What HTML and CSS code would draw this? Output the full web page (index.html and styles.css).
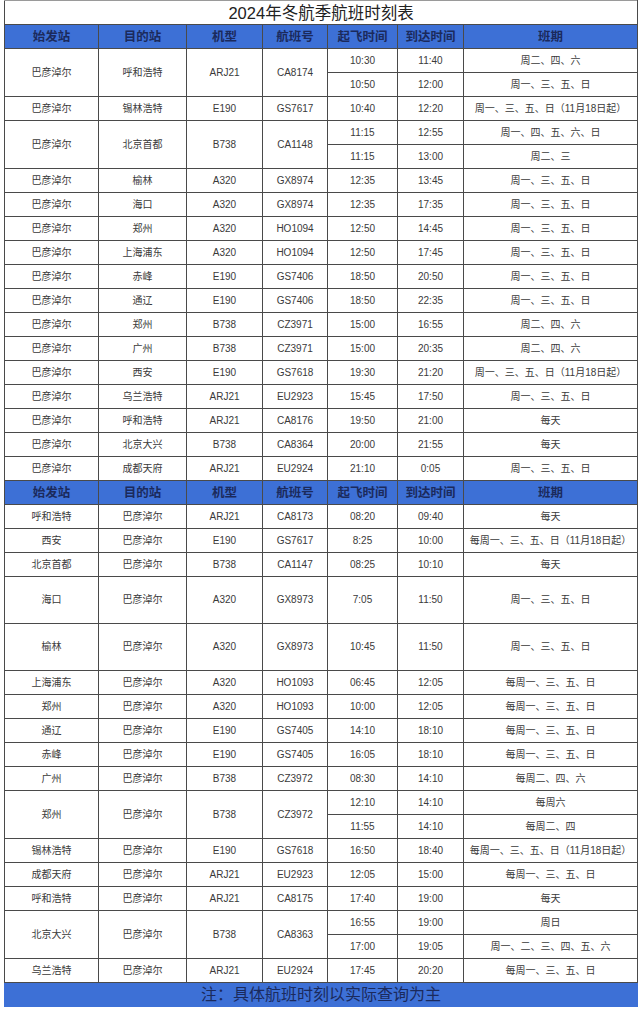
FILE: index.html
```html
<!DOCTYPE html>
<html lang="zh-CN">
<head>
<meta charset="utf-8">
<title>2024年冬航季航班时刻表</title>
<link rel="stylesheet" href="styles.css">
</head>
<body>
<table class="tt">
<colgroup>
<col class="c1"><col class="c2"><col class="c3"><col class="c4"><col class="c5"><col class="c6"><col class="c7">
</colgroup>
<tbody>
<tr class="title"><td colspan="7">2024年冬航季航班时刻表</td></tr>
<tr class="hd"><th>始发站</th><th>目的站</th><th>机型</th><th>航班号</th><th>起飞时间</th><th>到达时间</th><th>班期</th></tr>

<tr><td rowspan="2">巴彦淖尔</td><td rowspan="2">呼和浩特</td><td rowspan="2">ARJ21</td><td rowspan="2">CA8174</td><td>10:30</td><td>11:40</td><td>周二、四、六</td></tr>
<tr><td>10:50</td><td>12:00</td><td>周一、三、五、日</td></tr>
<tr><td>巴彦淖尔</td><td>锡林浩特</td><td>E190</td><td>GS7617</td><td>10:40</td><td>12:20</td><td>周一、三、五、日（11月18日起）</td></tr>
<tr><td rowspan="2">巴彦淖尔</td><td rowspan="2">北京首都</td><td rowspan="2">B738</td><td rowspan="2">CA1148</td><td>11:15</td><td>12:55</td><td>周一、四、五、六、日</td></tr>
<tr><td>11:15</td><td>13:00</td><td>周二、三</td></tr>
<tr><td>巴彦淖尔</td><td>榆林</td><td>A320</td><td>GX8974</td><td>12:35</td><td>13:45</td><td>周一、三、五、日</td></tr>
<tr><td>巴彦淖尔</td><td>海口</td><td>A320</td><td>GX8974</td><td>12:35</td><td>17:35</td><td>周一、三、五、日</td></tr>
<tr><td>巴彦淖尔</td><td>郑州</td><td>A320</td><td>HO1094</td><td>12:50</td><td>14:45</td><td>周一、三、五、日</td></tr>
<tr><td>巴彦淖尔</td><td>上海浦东</td><td>A320</td><td>HO1094</td><td>12:50</td><td>17:45</td><td>周一、三、五、日</td></tr>
<tr><td>巴彦淖尔</td><td>赤峰</td><td>E190</td><td>GS7406</td><td>18:50</td><td>20:50</td><td>周一、三、五、日</td></tr>
<tr><td>巴彦淖尔</td><td>通辽</td><td>E190</td><td>GS7406</td><td>18:50</td><td>22:35</td><td>周一、三、五、日</td></tr>
<tr><td>巴彦淖尔</td><td>郑州</td><td>B738</td><td>CZ3971</td><td>15:00</td><td>16:55</td><td>周二、四、六</td></tr>
<tr><td>巴彦淖尔</td><td>广州</td><td>B738</td><td>CZ3971</td><td>15:00</td><td>20:35</td><td>周二、四、六</td></tr>
<tr><td>巴彦淖尔</td><td>西安</td><td>E190</td><td>GS7618</td><td>19:30</td><td>21:20</td><td>周一、三、五、日（11月18日起）</td></tr>
<tr><td>巴彦淖尔</td><td>乌兰浩特</td><td>ARJ21</td><td>EU2923</td><td>15:45</td><td>17:50</td><td>周一、三、五、日</td></tr>
<tr><td>巴彦淖尔</td><td>呼和浩特</td><td>ARJ21</td><td>CA8176</td><td>19:50</td><td>21:00</td><td>每天</td></tr>
<tr><td>巴彦淖尔</td><td>北京大兴</td><td>B738</td><td>CA8364</td><td>20:00</td><td>21:55</td><td>每天</td></tr>
<tr><td>巴彦淖尔</td><td>成都天府</td><td>ARJ21</td><td>EU2924</td><td>21:10</td><td>0:05</td><td>周一、三、五、日</td></tr>

<tr class="hd"><th>始发站</th><th>目的站</th><th>机型</th><th>航班号</th><th>起飞时间</th><th>到达时间</th><th>班期</th></tr>

<tr><td>呼和浩特</td><td>巴彦淖尔</td><td>ARJ21</td><td>CA8173</td><td>08:20</td><td>09:40</td><td>每天</td></tr>
<tr><td>西安</td><td>巴彦淖尔</td><td>E190</td><td>GS7617</td><td>8:25</td><td>10:00</td><td>每周一、三、五、日（11月18日起）</td></tr>
<tr><td>北京首都</td><td>巴彦淖尔</td><td>B738</td><td>CA1147</td><td>08:25</td><td>10:10</td><td>每天</td></tr>
<tr class="tall"><td>海口</td><td>巴彦淖尔</td><td>A320</td><td>GX8973</td><td>7:05</td><td>11:50</td><td>周一、三、五、日</td></tr>
<tr class="tall2"><td>榆林</td><td>巴彦淖尔</td><td>A320</td><td>GX8973</td><td>10:45</td><td>11:50</td><td>周一、三、五、日</td></tr>
<tr><td>上海浦东</td><td>巴彦淖尔</td><td>A320</td><td>HO1093</td><td>06:45</td><td>12:05</td><td>每周一、三、五、日</td></tr>
<tr><td>郑州</td><td>巴彦淖尔</td><td>A320</td><td>HO1093</td><td>10:00</td><td>12:05</td><td>每周一、三、五、日</td></tr>
<tr><td>通辽</td><td>巴彦淖尔</td><td>E190</td><td>GS7405</td><td>14:10</td><td>18:10</td><td>每周一、三、五、日</td></tr>
<tr><td>赤峰</td><td>巴彦淖尔</td><td>E190</td><td>GS7405</td><td>16:05</td><td>18:10</td><td>每周一、三、五、日</td></tr>
<tr><td>广州</td><td>巴彦淖尔</td><td>B738</td><td>CZ3972</td><td>08:30</td><td>14:10</td><td>每周二、四、六</td></tr>
<tr><td rowspan="2">郑州</td><td rowspan="2">巴彦淖尔</td><td rowspan="2">B738</td><td rowspan="2">CZ3972</td><td>12:10</td><td>14:10</td><td>每周六</td></tr>
<tr><td>11:55</td><td>14:10</td><td>每周二、四</td></tr>
<tr><td>锡林浩特</td><td>巴彦淖尔</td><td>E190</td><td>GS7618</td><td>16:50</td><td>18:40</td><td>每周一、三、五、日（11月18日起）</td></tr>
<tr><td>成都天府</td><td>巴彦淖尔</td><td>ARJ21</td><td>EU2923</td><td>12:05</td><td>15:00</td><td>每周一、三、五、日</td></tr>
<tr><td>呼和浩特</td><td>巴彦淖尔</td><td>ARJ21</td><td>CA8175</td><td>17:40</td><td>19:00</td><td>每天</td></tr>
<tr><td rowspan="2">北京大兴</td><td rowspan="2">巴彦淖尔</td><td rowspan="2">B738</td><td rowspan="2">CA8363</td><td>16:55</td><td>19:00</td><td>周日</td></tr>
<tr><td>17:00</td><td>19:05</td><td>周一、二、三、四、五、六</td></tr>
<tr><td>乌兰浩特</td><td>巴彦淖尔</td><td>ARJ21</td><td>EU2924</td><td>17:45</td><td>20:20</td><td>每周一、三、五、日</td></tr>

<tr class="foot"><td colspan="7">注：具体航班时刻以实际查询为主</td></tr>
</tbody>
</table>
</body>
</html>
```

FILE: styles.css
```css
html, body {
  margin: 0;
  padding: 0;
  background: #ffffff;
}
body {
  font-family: "Liberation Sans", "Noto Sans CJK SC", sans-serif;
  color: #333333;
}
.tt {
  margin: 0 0 0 4px;
  width: 633px;
  table-layout: fixed;
  border-collapse: collapse;
}
.c1 { width: 94px; }
.c2 { width: 88px; }
.c3 { width: 76px; }
.c4 { width: 65px; }
.c5 { width: 70px; }
.c6 { width: 66px; }
.c7 { width: 174px; }

.tt td, .tt th {
  border: 1px solid #4a4a4a;
  padding: 0;
  text-align: center;
  vertical-align: middle;
  white-space: nowrap;
  overflow: hidden;
}
.tt tr {
  height: 24px;
}
.tt td {
  font-size: 10px;
  line-height: 12px;
  color: #3a3a3a;
}
.tt .title td {
  font-size: 16.5px;
  line-height: 20px;
  color: #222222;
  border-top-color: #9a9a9a;
}
.tt .hd th {
  background: #3d70d6;
  color: #1b2a5c;
  font-size: 12.5px;
  font-weight: bold;
  line-height: 14px;
}
.tt tr.tall { height: 47px; }
.tt tr.tall2 { height: 47px; }
.tt .foot td {
  background: #3d70d6;
  color: #1b2a5c;
  font-size: 16px;
  line-height: 20px;
  border-color: #3d70d6;
}
```
